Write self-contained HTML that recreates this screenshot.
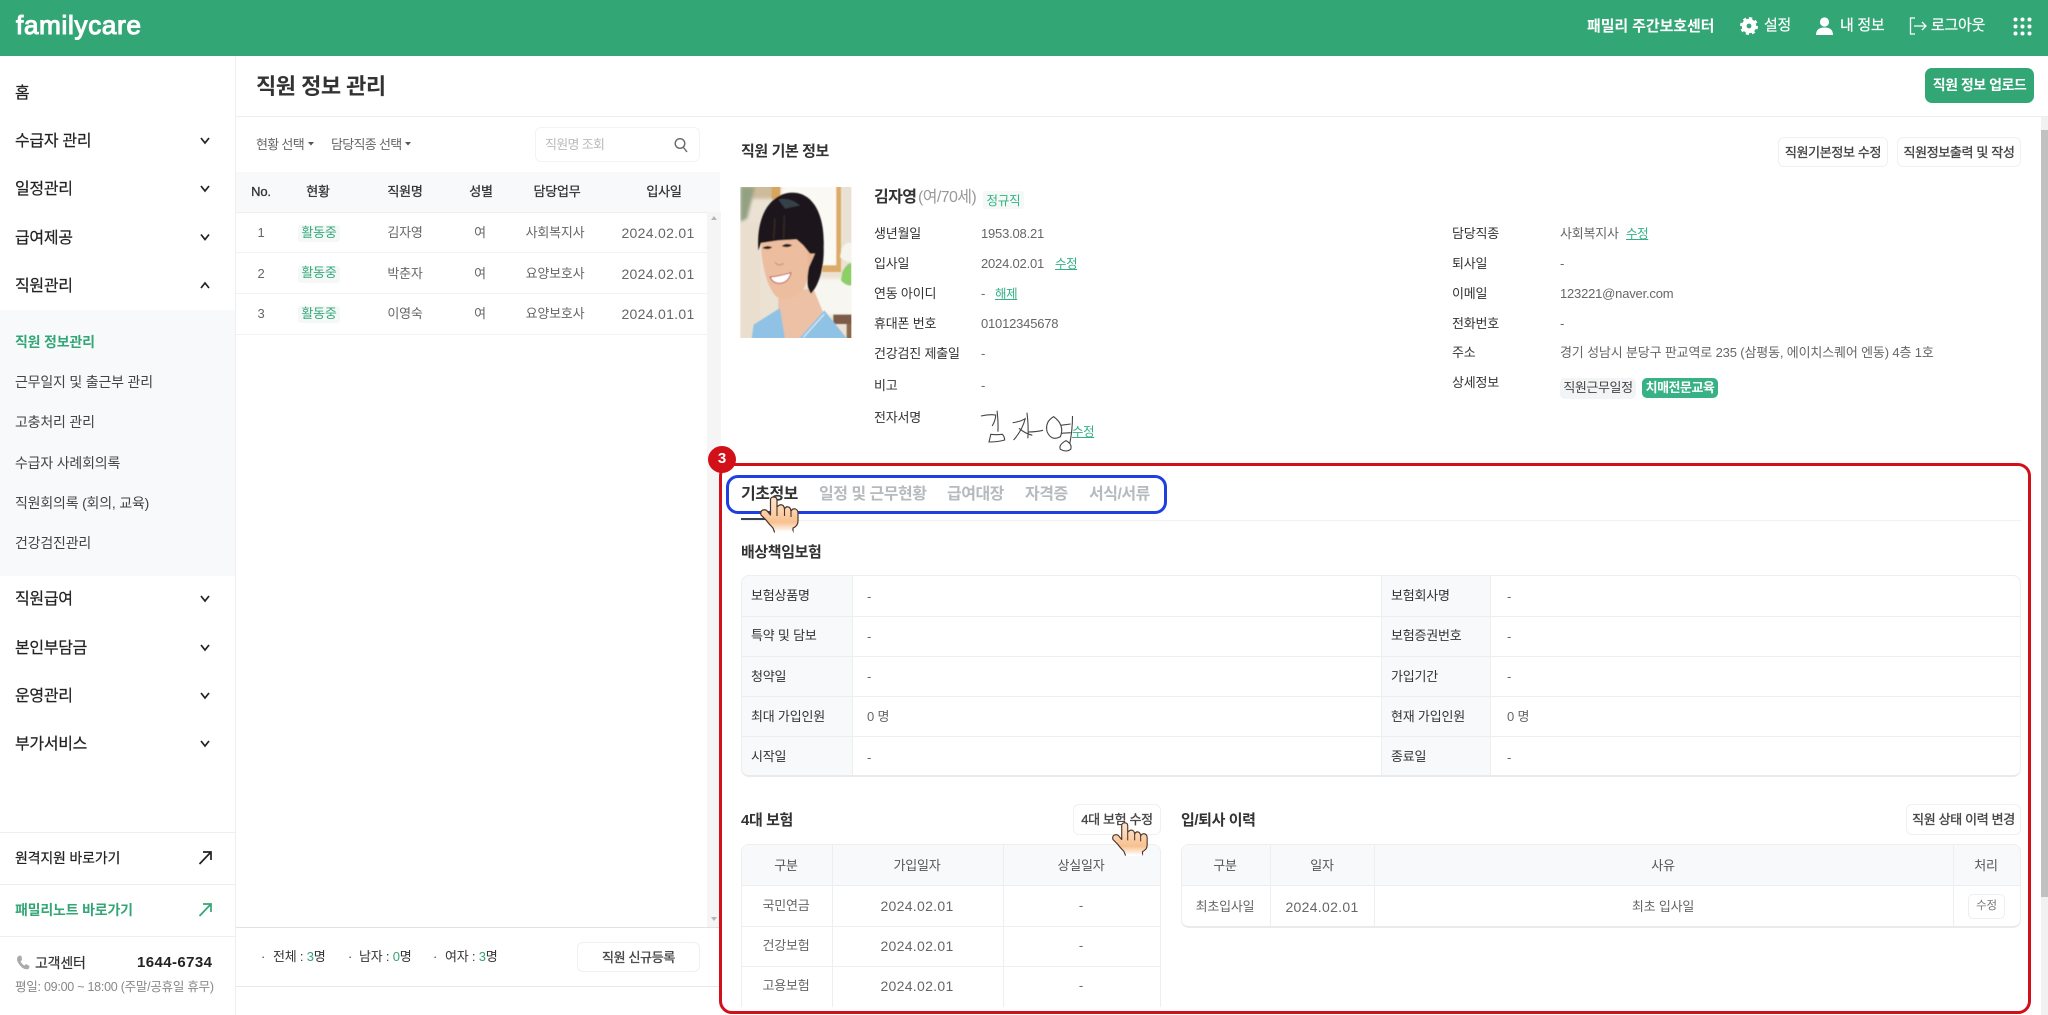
<!DOCTYPE html>
<html lang="ko"><head><meta charset="utf-8"><title>familycare</title>
<style>
html,body{margin:0;padding:0;width:2048px;height:1015px;overflow:hidden;background:#fff}
body{position:relative;font-family:"Liberation Sans","Noto Sans CJK KR",sans-serif;color:#333;font-size:13px;letter-spacing:-.2px}
.t{position:absolute;white-space:nowrap;line-height:20px;height:20px;margin-top:1px}
.c{transform:translateX(-50%)}
.b{font-weight:700}
.mid{-webkit-text-stroke:.3px currentColor}
.r{position:absolute;box-sizing:border-box}
.m{font-size:16px;color:#222;letter-spacing:-.3px;-webkit-text-stroke:.2px #222;margin-top:2px}
.s{font-size:14px;color:#444}
.g{color:#32a675}
.l{font-size:13px;color:#333}
.v{font-size:13px;color:#666}
.u{color:#34b084;text-decoration:underline;font-size:12.5px;letter-spacing:-.4px}
.btn{position:absolute;box-sizing:border-box;border:1px solid #eef0f1;border-radius:6px;background:#fff;text-align:center;font-size:13px;color:#444;letter-spacing:-.35px;-webkit-text-stroke:.35px #444}
.h{font-size:15px;font-weight:700;color:#333;letter-spacing:-.4px}
.tab{font-size:16px;font-weight:700;color:#b6babd;letter-spacing:-.5px;margin-top:2px}
.d{font-size:13px;color:#666}
.nav{font-size:15px;color:#fff;-webkit-text-stroke:.2px #fff;letter-spacing:-.3px}
svg{position:absolute;overflow:visible}
</style></head><body>

<!-- header -->
<div class="r" style="left:0;top:0;width:2048px;height:56px;background:#32a675"></div>
<div class="t" style="left:16px;top:14px;font-size:26px;color:#fff;letter-spacing:.72px;line-height:22px;height:24px;-webkit-text-stroke:1.1px #fff;margin-top:0">familycare</div>
<div class="t b" style="left:1587px;top:16px;font-size:15px;color:#fff;letter-spacing:-.1px">패밀리 주간보호센터</div>
<svg style="left:1740px;top:17px" width="18" height="18" viewBox="0 0 18 18"><circle cx="9" cy="9" r="7.800" fill="none" stroke="#fff" stroke-width="2.400" stroke-dasharray="3.100 3"/><circle cx="9" cy="9" r="4.800" fill="none" stroke="#fff" stroke-width="4.800"/></svg>
<div class="t nav" style="left:1764px;top:15px">설정</div>
<svg style="left:1816px;top:17px" width="17" height="18" viewBox="0 0 17 18"><circle cx="8.500" cy="5" r="4.600" fill="#fff"/><path d="M0 18 Q0 10.500 8.500 10.500 Q17 10.500 17 18Z" fill="#fff"/></svg>
<div class="t nav" style="left:1840px;top:15px">내 정보</div>
<svg style="left:1909px;top:17px" width="18" height="18" viewBox="0 0 18 18" fill="none" stroke="#fff" stroke-width="1.300"><path d="M6 1H1.500V17H6M5 9H17M13 5L17 9L13 13"/></svg>
<div class="t nav" style="left:1931px;top:15px">로그아웃</div>
<svg style="left:2013px;top:17px" width="19" height="19" viewBox="0 0 19 19" fill="#fff"><circle cx="2.500" cy="2.500" r="2"/><circle cx="9.500" cy="2.500" r="2"/><circle cx="16.500" cy="2.500" r="2"/><circle cx="2.500" cy="9.500" r="2"/><circle cx="9.500" cy="9.500" r="2"/><circle cx="16.500" cy="9.500" r="2"/><circle cx="2.500" cy="16.500" r="2"/><circle cx="9.500" cy="16.500" r="2"/><circle cx="16.500" cy="16.500" r="2"/></svg>

<!-- sidebar -->
<div class="r" style="left:235px;top:56px;width:1px;height:959px;background:#eee"></div>
<div class="t m" style="left:15px;top:82px">홈</div>
<div class="t m" style="left:15px;top:130px">수급자 관리</div>
<div class="t m" style="left:15px;top:178px">일정관리</div>
<div class="t m" style="left:15px;top:227px">급여제공</div>
<div class="t m" style="left:15px;top:275px">직원관리</div>
<svg width="235" height="1015" style="left:0;top:0" fill="none" stroke="#222" stroke-width="1.700"><path d="M201 138L205 143L209 138M201 186L205 191L209 186M201 234.500L205 239.500L209 234.500M201 288L205 283L209 288M201 596L205 601L209 596M201 645L205 650L209 645M201 693L205 698L209 693M201 741L205 746L209 741"/><path d="M199.500 864L211 852M203 852H211V860"/><path d="M199.500 916L211 904M203 904H211V912" stroke="#32a675"/></svg>
<div class="r" style="left:0;top:310px;width:235px;height:266px;background:#f8f9fb"></div>
<div class="t s b g" style="left:15px;top:331px">직원 정보관리</div>
<div class="t s" style="left:15px;top:371px">근무일지 및 출근부 관리</div>
<div class="t s" style="left:15px;top:411px">고충처리 관리</div>
<div class="t s" style="left:15px;top:452px">수급자 사례회의록</div>
<div class="t s" style="left:15px;top:492px">직원회의록 (회의, 교육)</div>
<div class="t s" style="left:15px;top:532px">건강검진관리</div>
<div class="t m" style="left:15px;top:588px">직원급여</div>
<div class="t m" style="left:15px;top:637px">본인부담금</div>
<div class="t m" style="left:15px;top:685px">운영관리</div>
<div class="t m" style="left:15px;top:733px">부가서비스</div>
<div class="r" style="left:0;top:832px;width:235px;height:1px;background:#eee"></div>
<div class="r" style="left:0;top:884px;width:235px;height:1px;background:#eee"></div>
<div class="r" style="left:0;top:936px;width:235px;height:1px;background:#eee"></div>
<div class="t" style="left:15px;top:847px;font-size:14px;color:#222;-webkit-text-stroke:.2px #222">원격지원 바로가기</div>
<div class="t b g" style="left:15px;top:899px;font-size:14px">패밀리노트 바로가기</div>
<svg style="left:16px;top:955px" width="14" height="15" viewBox="0 0 14 15"><path d="M3 0.500L5.500 1L6 5L4.500 6.300Q6 9.500 8.500 10.500L10 9L13.500 11L13 13.500Q10 15.500 6 12.500Q0.500 7.500 1 3Z" fill="#aaa"/></svg>
<div class="t" style="left:35px;top:952px;font-size:14px;color:#333;-webkit-text-stroke:.2px #333">고객센터</div>
<div class="t b" style="left:137px;top:952px;font-size:15px;color:#222;letter-spacing:.4px">1644-6734</div>
<div class="t" style="left:15px;top:976px;font-size:12.500px;color:#888;letter-spacing:-.25px">평일: 09:00 ~ 18:00 (주말/공휴일 휴무)</div>

<!-- title bar -->
<div class="t b" style="left:256px;top:76px;font-size:22px;color:#333;letter-spacing:-.5px">직원 정보 관리</div>
<div class="r" style="left:235px;top:116px;width:1813px;height:1px;background:#eee"></div>
<div class="r" style="left:1925px;top:68px;width:109px;height:35px;background:#32a675;border-radius:7px"></div>
<div class="t b c" style="left:1979.500px;top:74px;font-size:14px;color:#fff;letter-spacing:-.5px">직원 정보 업로드</div>

<!-- left list -->
<div class="t" style="left:256px;top:134px;font-size:13px;color:#666;letter-spacing:-.7px">현황 선택</div>
<div class="t" style="left:331px;top:134px;font-size:13px;color:#666;letter-spacing:-.7px">담당직종 선택</div>
<svg width="720" height="200" style="left:0;top:0" fill="#555"><path d="M308 142H314L311 145.500Z M405 142H411L408 145.500Z"/></svg>
<div class="r" style="left:535px;top:127px;width:165px;height:35px;border:1px solid #f2f3f4;border-radius:6px"></div>
<div class="t" style="left:545px;top:134px;font-size:13px;color:#bbb;letter-spacing:-.7px">직원명 조회</div>
<svg style="left:674px;top:137px" width="14" height="16" viewBox="0 0 14 16" fill="none" stroke="#666" stroke-width="1.400"><circle cx="6" cy="6.500" r="4.800"/><path d="M9.500 10.500L13 15"/></svg>
<div class="r" style="left:236px;top:172px;width:484px;height:40px;background:#f8f9fa"></div>
<div class="r" style="left:236px;top:212px;width:471px;height:1px;background:#eee"></div>
<div class="t mid c" style="left:261px;top:181px;color:#333">No.</div>
<div class="t mid c" style="left:318px;top:181px;color:#333">현황</div>
<div class="t mid c" style="left:405px;top:181px;color:#333">직원명</div>
<div class="t mid c" style="left:481px;top:181px;color:#333">성별</div>
<div class="t mid c" style="left:557px;top:181px;color:#333">담당업무</div>
<div class="t mid c" style="left:664px;top:181px;color:#333">입사일</div>

<div class="r" style="left:236px;top:252px;width:471px;height:1px;background:#f1f2f3"></div>
<div class="r" style="left:236px;top:293px;width:471px;height:1px;background:#f1f2f3"></div>
<div class="r" style="left:236px;top:334px;width:471px;height:1px;background:#f1f2f3"></div>
<div class="r" style="left:298px;top:225px;width:42px;height:17px;background:#f4f8f6;border-radius:3px"></div>
<div class="r" style="left:298px;top:266px;width:42px;height:17px;background:#f4f8f6;border-radius:3px"></div>
<div class="r" style="left:298px;top:306px;width:42px;height:17px;background:#f4f8f6;border-radius:3px"></div>

<div class="t d c" style="left:261px;top:222px">1</div><div class="t d c g" style="left:319px;top:222px;color:#34a97d">활동중</div><div class="t d c" style="left:405px;top:222px">김자영</div><div class="t d c" style="left:480px;top:222px">여</div><div class="t d c" style="left:555px;top:222px">사회복지사</div><div class="t d c" style="left:658px;top:222px;font-size:14px;letter-spacing:.3px">2024.02.01</div>
<div class="t d c" style="left:261px;top:263px">2</div><div class="t d c g" style="left:319px;top:262px;color:#34a97d">활동중</div><div class="t d c" style="left:405px;top:263px">박춘자</div><div class="t d c" style="left:480px;top:263px">여</div><div class="t d c" style="left:555px;top:263px">요양보호사</div><div class="t d c" style="left:658px;top:263px;font-size:14px;letter-spacing:.3px">2024.02.01</div>
<div class="t d c" style="left:261px;top:303px">3</div><div class="t d c g" style="left:319px;top:303px;color:#34a97d">활동중</div><div class="t d c" style="left:405px;top:303px">이영숙</div><div class="t d c" style="left:480px;top:303px">여</div><div class="t d c" style="left:555px;top:303px">요양보호사</div><div class="t d c" style="left:658px;top:303px;font-size:14px;letter-spacing:.3px">2024.01.01</div>

<!-- scrollbars -->
<div class="r" style="left:707px;top:212px;width:14px;height:716px;background:#f5f5f5"></div>
<svg width="720" height="1015" style="left:0;top:0" fill="#b5b5b5"><path d="M711 220H717L714 216Z M711 917H717L714 921Z"/></svg>
<div class="r" style="left:2041px;top:117px;width:7px;height:898px;background:#f1f1f1"></div>
<div class="r" style="left:2041px;top:130px;width:7px;height:767px;background:#c1c1c1"></div>

<!-- left footer -->
<div class="r" style="left:236px;top:927px;width:484px;height:1px;background:#e2e2e2"></div>
<div class="r" style="left:236px;top:986px;width:484px;height:1px;background:#e8e8e8"></div>
<div class="t" style="left:261px;top:946px;color:#444">·</div>
<div class="t" style="left:273px;top:946px;color:#333">전체 : <span style="color:#32a675">3</span>명</div>
<div class="t" style="left:348px;top:946px;color:#444">·</div>
<div class="t" style="left:359px;top:946px;color:#333">남자 : <span style="color:#32a675">0</span>명</div>
<div class="t" style="left:433px;top:946px;color:#444">·</div>
<div class="t" style="left:445px;top:946px;color:#333">여자 : <span style="color:#32a675">3</span>명</div>
<div class="btn" style="left:577px;top:942px;width:123px;height:30px;line-height:29px">직원 신규등록</div>

<!-- right: basic info -->
<div class="t h" style="left:741px;top:141px;">직원 기본 정보</div>
<div class="btn" style="left:1778px;top:137px;width:110px;height:30px;line-height:30px">직원기본정보 수정</div>
<div class="btn" style="left:1897px;top:137px;width:124px;height:30px;line-height:30px">직원정보출력 및 작성</div>

<!-- photo -->
<svg style="left:735px;top:182px" width="122" height="162" viewBox="0 0 366 486">
<defs><clipPath id="ph"><rect x="16" y="15" width="333" height="453"/></clipPath><filter id="bl"><feGaussianBlur stdDeviation="5"/></filter><filter id="bs"><feGaussianBlur stdDeviation="1.800"/></filter></defs>
<g clip-path="url(#ph)">
<rect x="0" y="0" width="366" height="486" fill="#ece2d4"/>
<g filter="url(#bl)">
<rect x="16" y="0" width="110" height="50" fill="#cdbb9c"/>
<path d="M16 15H60L36 110L16 120Z" fill="#93a183"/>
<rect x="16" y="120" width="60" height="350" fill="#eadfce"/>
<rect x="140" y="0" width="170" height="260" fill="#fbf9f3"/>
<rect x="318" y="0" width="40" height="190" fill="#e9e2d4"/>
<rect x="230" y="290" width="130" height="110" fill="#f7f6f0"/>
</g>
<g filter="url(#bs)">
<rect x="110" y="10" width="26" height="42" fill="#d8a55d"/>
<rect x="304" y="10" width="14" height="255" fill="#dcab6a"/>
<rect x="262" y="250" width="56" height="20" fill="#dcab6a"/>
<path d="M320 200Q335 175 350 185V240Q330 240 315 225Z" fill="#f5f5ee"/>
<path d="M322 270Q338 240 350 245V310Q332 312 318 295Z" fill="#8ccf68"/>
<rect x="295" y="398" width="60" height="28" fill="#7c5c4a"/>
<rect x="335" y="426" width="20" height="50" fill="#8a6a50"/>
<path d="M130 330L235 320L268 400L200 470H150L130 385Z" fill="#ecc1a5"/>
<path d="M50 470L56 428L135 378L150 470Z" fill="#8fc2e4"/>
<path d="M192 470L268 385L336 470Z" fill="#8fc2e4"/>
<path d="M205 466L268 396" stroke="#e8f2fa" stroke-width="3" fill="none"/>
<path d="M78 175L192 165L228 205L232 240Q222 295 200 330Q160 362 125 345Q100 320 88 265Q78 225 78 175Z" fill="#edbd9f"/>
<path d="M216 215Q240 185 246 215Q244 255 222 258Z" fill="#e9b596"/>
<path d="M70 205C62 90 115 32 172 32C238 32 270 105 266 195C268 255 252 310 228 335C214 318 216 280 222 255L240 215L225 215L205 190L185 172L130 175L78 183Z" fill="#1b191d"/>
<path d="M130 52Q165 45 195 70L150 80Z" fill="#34404a"/>
<path d="M120 110L116 172M148 100L146 170" stroke="#4a3226" stroke-width="5" opacity=".6" fill="none"/>
<path d="M82 198Q96 188 112 196Q98 206 82 198Z" fill="#2a201c"/>
<path d="M140 192Q155 180 172 190Q155 200 140 192Z" fill="#2a201c"/>
<path d="M105 285Q135 282 168 272Q160 305 130 304Q112 302 105 285Z" fill="#fff" stroke="#c25a50" stroke-width="3"/>
<path d="M120 240Q130 256 146 244" stroke="#c8906e" stroke-width="3" fill="none"/>
</g></g></svg>

<div class="t b" style="left:874px;top:187px;font-size:16px;color:#333;letter-spacing:-.6px">김자영</div>
<div class="t" style="left:918px;top:187px;font-size:16px;color:#999;letter-spacing:-.6px">(여/70세)</div>
<div class="r" style="left:983px;top:191px;width:41px;height:18px;background:#f4f8f6;border-radius:3px"></div>
<div class="t c" style="left:1003.500px;top:190px;font-size:12.500px;color:#34b084">정규직</div>

<div class="t l" style="left:874px;top:223px">생년월일</div><div class="t v" style="left:981px;top:223px">1953.08.21</div>
<div class="t l" style="left:874px;top:253px">입사일</div><div class="t v" style="left:981px;top:253px">2024.02.01</div><div class="t u" style="left:1055px;top:253px;">수정</div>
<div class="t l" style="left:874px;top:283px">연동 아이디</div><div class="t v" style="left:981px;top:283px">-</div><div class="t u" style="left:995px;top:283px;">해제</div>
<div class="t l" style="left:874px;top:313px">휴대폰 번호</div><div class="t v" style="left:981px;top:313px">01012345678</div>
<div class="t l" style="left:874px;top:343px">건강검진 제출일</div><div class="t v" style="left:981px;top:343px">-</div>
<div class="t l" style="left:874px;top:375px">비고</div><div class="t v" style="left:981px;top:375px">-</div>
<div class="t l" style="left:874px;top:407px">전자서명</div>
<svg style="left:710px;top:120px" width="700" height="340" viewBox="0 0 1568 1020" preserveAspectRatio="none" fill="none" stroke="#444"><g stroke-width="1.100"><path d="M607 888Q625 882 640 885Q640 900 632 918" vector-effect="non-scaling-stroke"/><path d="M643 872Q646 905 645 935" vector-effect="non-scaling-stroke"/><path d="M629 943L625 966Q645 966 660 960Q660 950 655 943Q640 945 629 943Z" vector-effect="non-scaling-stroke"/><path d="M678 908Q695 905 706 896Q700 930 680 960M692 925Q705 940 722 946" vector-effect="non-scaling-stroke"/><path d="M710 878Q714 920 712 955M712 936Q730 936 746 931" vector-effect="non-scaling-stroke"/><path d="M770 890Q750 905 755 935Q765 965 785 950Q795 915 770 890Z" vector-effect="non-scaling-stroke"/><path d="M812 888Q812 930 806 970M785 916L808 912M786 940L808 938" vector-effect="non-scaling-stroke"/><path d="M797 962Q780 975 785 988Q798 998 808 988Q812 972 797 962Z" vector-effect="non-scaling-stroke"/></g></svg>
<div class="t u" style="left:1072px;top:421px;">수정</div>

<div class="t l" style="left:1452px;top:223px">담당직종</div><div class="t v" style="left:1560px;top:223px">사회복지사</div><div class="t u" style="left:1626px;top:223px;">수정</div>
<div class="t l" style="left:1452px;top:253px">퇴사일</div><div class="t v" style="left:1560px;top:253px">-</div>
<div class="t l" style="left:1452px;top:283px">이메일</div><div class="t v" style="left:1560px;top:283px">123221@naver.com</div>
<div class="t l" style="left:1452px;top:313px">전화번호</div><div class="t v" style="left:1560px;top:313px">-</div>
<div class="t l" style="left:1452px;top:342px">주소</div><div class="t v" style="left:1560px;top:342px;letter-spacing:-.15px">경기 성남시 분당구 판교역로 235 (삼평동, 에이치스퀘어 엔동) 4층 1호</div>
<div class="t l" style="left:1452px;top:372px">상세정보</div>
<div class="r" style="left:1560px;top:378px;width:76px;height:21px;background:#f3f4f6;border-radius:5px"></div>
<div class="t c" style="left:1598px;top:377px;font-size:13px;color:#444;letter-spacing:-.4px">직원근무일정</div>
<div class="r" style="left:1642px;top:378px;width:76px;height:20px;background:#36b285;border-radius:5px"></div>
<div class="t b c" style="left:1680px;top:377px;font-size:13px;color:#fff;letter-spacing:-.5px">치매전문교육</div>

<!-- tabs -->
<div class="t tab" style="left:741px;top:483px;color:#333">기초정보</div>
<div class="t tab" style="left:819px;top:483px">일정 및 근무현황</div>
<div class="t tab" style="left:947px;top:483px">급여대장</div>
<div class="t tab" style="left:1025px;top:483px">자격증</div>
<div class="t tab" style="left:1089px;top:483px">서식/서류</div>
<div class="r" style="left:741px;top:520px;width:1280px;height:1px;background:#f0f1f2"></div>
<div class="r" style="left:741px;top:518px;width:57px;height:2px;background:#3a4450"></div>

<!-- insurance table -->
<div class="t h" style="left:741px;top:542px">배상책임보험</div>
<div class="r" style="left:741px;top:575px;width:1280px;height:202px;border:1px solid #eceef0;border-bottom:2px solid #e8eaec;border-radius:8px;overflow:hidden">
<div class="r" style="left:0;top:0;width:111px;height:202px;background:#f8f9fb;border-right:1px solid #eceef0"></div>
<div class="r" style="left:639px;top:0;width:110px;height:202px;background:#f8f9fb;border-left:1px solid #eceef0;border-right:1px solid #eceef0"></div>
<div class="r" style="left:0;top:40px;width:1280px;height:1px;background:#eceef0"></div>
<div class="r" style="left:0;top:80px;width:1280px;height:1px;background:#eceef0"></div>
<div class="r" style="left:0;top:120px;width:1280px;height:1px;background:#eceef0"></div>
<div class="r" style="left:0;top:160px;width:1280px;height:1px;background:#eceef0"></div>
</div>
<div class="t l" style="left:751px;top:585px">보험상품명</div><div class="t v" style="left:867px;top:586px">-</div><div class="t l" style="left:1391px;top:585px">보험회사명</div><div class="t v" style="left:1507px;top:586px">-</div>
<div class="t l" style="left:751px;top:625px">특약 및 담보</div><div class="t v" style="left:867px;top:626px">-</div><div class="t l" style="left:1391px;top:625px">보험증권번호</div><div class="t v" style="left:1507px;top:626px">-</div>
<div class="t l" style="left:751px;top:666px">청약일</div><div class="t v" style="left:867px;top:666px">-</div><div class="t l" style="left:1391px;top:666px">가입기간</div><div class="t v" style="left:1507px;top:666px">-</div>
<div class="t l" style="left:751px;top:706px">최대 가입인원</div><div class="t v" style="left:867px;top:706px">0 명</div><div class="t l" style="left:1391px;top:706px">현재 가입인원</div><div class="t v" style="left:1507px;top:706px">0 명</div>
<div class="t l" style="left:751px;top:746px">시작일</div><div class="t v" style="left:867px;top:747px">-</div><div class="t l" style="left:1391px;top:746px">종료일</div><div class="t v" style="left:1507px;top:747px">-</div>

<!-- 4대 보험 -->
<div class="t h" style="left:741px;top:810px">4대 보험</div>
<div class="btn" style="left:1073px;top:804px;width:88px;height:31px;line-height:30px">4대 보험 수정</div>
<div class="r" style="left:741px;top:844px;width:420px;height:163px;border:1px solid #eceef0;border-bottom:0;border-radius:8px 8px 0 0;overflow:hidden">
<div class="r" style="left:0;top:0;width:420px;height:41px;background:#f8f9fb;border-bottom:1px solid #eceef0"></div>
<div class="r" style="left:90px;top:0;width:1px;height:163px;background:#eceef0"></div>
<div class="r" style="left:261px;top:0;width:1px;height:163px;background:#eceef0"></div>
<div class="r" style="left:0;top:81px;width:420px;height:1px;background:#eceef0"></div>
<div class="r" style="left:0;top:121px;width:420px;height:1px;background:#eceef0"></div>
</div>
<div class="t l c" style="left:786px;top:855px;color:#555">구분</div><div class="t l c" style="left:917px;top:855px;color:#555">가입일자</div><div class="t l c" style="left:1081px;top:855px;color:#555">상실일자</div>
<div class="t d c" style="left:786px;top:895px">국민연금</div><div class="t d c" style="left:917px;top:895px;font-size:14px;letter-spacing:.3px">2024.02.01</div><div class="t d c" style="left:1081px;top:895px">-</div>
<div class="t d c" style="left:786px;top:935px">건강보험</div><div class="t d c" style="left:917px;top:935px;font-size:14px;letter-spacing:.3px">2024.02.01</div><div class="t d c" style="left:1081px;top:935px">-</div>
<div class="t d c" style="left:786px;top:975px">고용보험</div><div class="t d c" style="left:917px;top:975px;font-size:14px;letter-spacing:.3px">2024.02.01</div><div class="t d c" style="left:1081px;top:975px">-</div>

<!-- 입/퇴사 이력 -->
<div class="t h" style="left:1181px;top:810px">입/퇴사 이력</div>
<div class="btn" style="left:1906px;top:804px;width:115px;height:31px;line-height:30px">직원 상태 이력 변경</div>
<div class="r" style="left:1181px;top:844px;width:840px;height:84px;border:1px solid #eceef0;border-bottom:2px solid #e8eaec;border-radius:8px;overflow:hidden">
<div class="r" style="left:0;top:0;width:840px;height:41px;background:#f8f9fb;border-bottom:1px solid #eceef0"></div>
<div class="r" style="left:88px;top:0;width:1px;height:84px;background:#eceef0"></div>
<div class="r" style="left:192px;top:0;width:1px;height:84px;background:#eceef0"></div>
<div class="r" style="left:771px;top:0;width:1px;height:84px;background:#eceef0"></div>
</div>
<div class="t l c" style="left:1225px;top:855px;color:#555">구분</div><div class="t l c" style="left:1322px;top:855px;color:#555">일자</div><div class="t l c" style="left:1663px;top:855px;color:#555">사유</div><div class="t l c" style="left:1986px;top:855px;color:#555">처리</div>
<div class="t d c" style="left:1225px;top:896px">최초입사일</div><div class="t d c" style="left:1322px;top:896px;font-size:14px;letter-spacing:.3px">2024.02.01</div><div class="t d c" style="left:1663px;top:896px">최초 입사일</div>
<div class="r" style="left:1968px;top:894px;width:37px;height:25px;border:1px solid #eceef0;border-radius:5px"></div>
<div class="t c" style="left:1986.500px;top:895px;font-size:11.500px;color:#777">수정</div>

<!-- annotation -->
<div class="r" style="left:719px;top:463px;width:1312px;height:551px;border:3px solid #d2101a;border-radius:13px"></div>
<div class="r" style="left:726px;top:475px;width:441px;height:39px;border:3px solid #1f3fe0;border-radius:12px"></div>
<div class="r" style="left:708px;top:446px;width:28px;height:27px;background:#d2101a;border-radius:50%"></div>
<div class="t b c" style="left:722px;top:448px;color:#fff;font-size:15px;letter-spacing:0;">3</div>

<!-- hands -->
<svg style="left:760px;top:497px" width="40" height="36" viewBox="0 0 40 36"><defs><linearGradient id="hg" x1="0" y1="0" x2="0" y2="1"><stop offset="0" stop-color="#fbe6d2"/><stop offset=".35" stop-color="#fbd6b4"/><stop offset=".72" stop-color="#f8c090"/><stop offset="1" stop-color="#fff"/></linearGradient></defs><path d="M10.500 18V3Q10.500 0 13.500 0Q17 0 17 3V10Q20 7 22 8Q24 8.500 24.500 12Q26 9 28.500 10Q30.500 10.500 31 14Q33 11 35.500 12Q38 13 38 16V24Q38 29 33 31V35H14.500L13 31Q9 27 6 23L1 18Q0 14 3 13Q6 12 8 15L10.500 18Z" fill="url(#hg)" stroke="#4a3324" stroke-width="1.200" stroke-linejoin="round"/><path d="M17 10V19M24.500 12V19M31 14V20" stroke="#4a3324" stroke-width="1.100" fill="none"/><path d="M15 35H33" stroke="#fff" stroke-width="2"/></svg>
<svg style="left:1112px;top:822px" width="37" height="35" viewBox="0 0 40 36"><path d="M10.500 18V3Q10.500 0 13.500 0Q17 0 17 3V10Q20 7 22 8Q24 8.500 24.500 12Q26 9 28.500 10Q30.500 10.500 31 14Q33 11 35.500 12Q38 13 38 16V24Q38 29 33 31V35H14.500L13 31Q9 27 6 23L1 18Q0 14 3 13Q6 12 8 15L10.500 18Z" fill="url(#hg)" stroke="#4a3324" stroke-width="1.200" stroke-linejoin="round"/><path d="M17 10V19M24.500 12V19M31 14V20" stroke="#4a3324" stroke-width="1.100" fill="none"/><path d="M15 35H33" stroke="#fff" stroke-width="2"/></svg>
</body></html>
